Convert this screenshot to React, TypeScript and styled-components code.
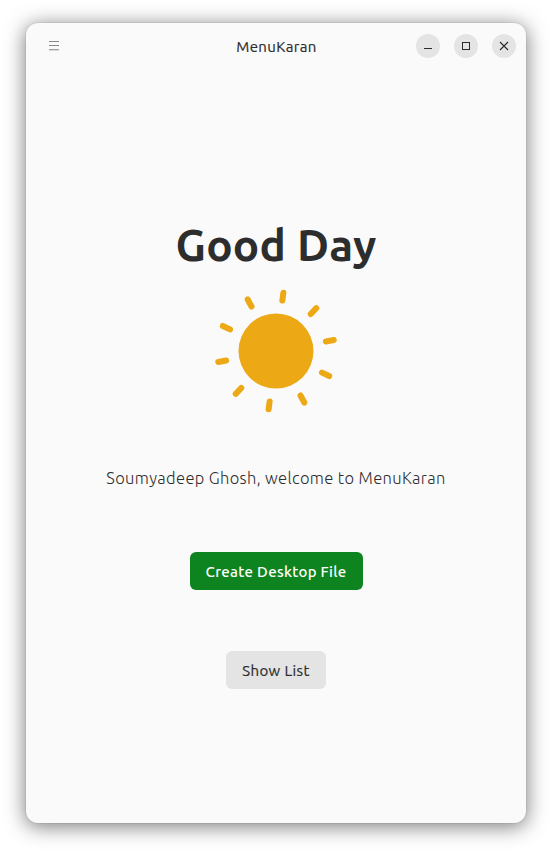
import React from "react";
import styled, { createGlobalStyle } from "styled-components";

const GlobalStyle = createGlobalStyle`
  *, *::before, *::after { box-sizing: border-box; }
  html, body { margin: 0; background: #fff; }
  body {
    color: #2d2d2d;
    font-family: Ubuntu, "Noto Sans", "Open Sans", sans-serif;
  }
`;

const Desktop = styled.div`
  display: flex;
  justify-content: center;
  height: 852px;
  padding-top: 23px;
  overflow: hidden;
`;

const Window = styled.main`
  display: flex;
  flex-direction: column;
  width: 500px;
  height: 800px;
  border-radius: 12px;
  background: #fafafa;
  box-shadow: 0 3px 20px 1px rgba(0, 0, 0, 0.5), 0 0 0 1px rgba(0, 0, 0, 0.05);
`;

const HeaderBar = styled.header`
  display: grid;
  grid-template-columns: 1fr auto 1fr;
  align-items: center;
  height: 46px;
  padding: 0 10px;
`;

const Title = styled.h1`
  margin: 0;
  padding: 1px 0 0 1px;
  font-size: 15px;
  font-weight: 400;
  line-height: 20px;
  letter-spacing: 0.35px;
  -webkit-text-stroke: 0.2px;
`;

const MenuButton = styled.button`
  display: flex;
  width: 16px;
  height: 16px;
  margin-left: 10px;
  padding: 0;
  border: 0;
  background: none;
  color: #888;
`;

const WindowControls = styled.div`
  display: flex;
  justify-content: flex-end;
  gap: 14px;
`;

const ControlButton = styled.button`
  width: 24px;
  height: 24px;
  padding: 0;
  border: 0;
  border-radius: 50%;
  background: #e4e4e4;
  color: #2a2a2a;

  svg { display: block; }
`;

const Content = styled.section`
  display: flex;
  flex-direction: column;
  align-items: center;
`;

const Greeting = styled.h2`
  margin: 144px 0 0;
  font-size: 44px;
  font-weight: 600;
  line-height: 64px;
  letter-spacing: 0.25px;
  white-space: nowrap;
`;

const Sun = styled.svg`
  display: block;
  width: 128px;
  height: 128px;
  margin-top: 10px;
`;

const Welcome = styled.p`
  margin: 51px 0 0;
  font-size: 16.5px;
  font-weight: 300;
  line-height: 24px;
  letter-spacing: 0.35px;
  white-space: nowrap;
`;

const ActionButton = styled.button<{ $primary?: boolean }>`
  width: ${({ $primary }) => ($primary ? 173 : 100)}px;
  height: 38px;
  margin-top: ${({ $primary }) => ($primary ? 61.5 : 61.8)}px;
  padding: ${({ $primary }) => ($primary ? 2 : 1)}px 0 0;
  border: 0;
  border-radius: 6px;
  background: ${({ $primary }) => ($primary ? "#0e8420" : "#e4e4e4")};
  color: ${({ $primary }) => ($primary ? "#fff" : "#2d2d2d")};
  font-family: Ubuntu, "Noto Sans", "Open Sans", sans-serif;
  font-size: 15px;
  font-weight: ${({ $primary }) => ($primary ? 500 : 400)};
  line-height: 36px;
  letter-spacing: ${({ $primary }) => ($primary ? 0.3 : 0.4)}px;
  -webkit-text-stroke: ${({ $primary }) => ($primary ? 0 : 0.2)}px;
  white-space: nowrap;
`;

const RAY_ANGLES = Array.from({ length: 10 }, (_, i) => 7.2 + i * 36);

export default function App() {
  return (
    <>
      <GlobalStyle />
      <Desktop>
        <Window>
          <HeaderBar>
            <MenuButton aria-label="Menu">
              <svg width="16" height="16" viewBox="0 0 16 16" fill="currentColor" shapeRendering="crispEdges">
                <rect x="3" y="3" width="10" height="1" />
                <rect x="3" y="7" width="10" height="1" />
                <rect x="3" y="11" width="10" height="1" opacity="0.8" />
                <rect x="3" y="12" width="10" height="1" opacity="0.25" />
              </svg>
            </MenuButton>
            <Title>MenuKaran</Title>
            <WindowControls>
              <ControlButton aria-label="Minimize">
                <svg width="24" height="24" viewBox="0 0 24 24">
                  <rect x="8" y="14" width="8" height="1" fill="currentColor" />
                </svg>
              </ControlButton>
              <ControlButton aria-label="Maximize">
                <svg width="24" height="24" viewBox="0 0 24 24">
                  <rect x="8.5" y="8.5" width="7" height="7" fill="none" stroke="currentColor" />
                </svg>
              </ControlButton>
              <ControlButton aria-label="Close">
                <svg width="24" height="24" viewBox="0 0 24 24">
                  <path d="M8 8l8 8M16 8l-8 8" fill="none" stroke="currentColor" strokeWidth="1.1" />
                </svg>
              </ControlButton>
            </WindowControls>
          </HeaderBar>
          <Content>
            <Greeting>Good Day</Greeting>
            <Sun viewBox="-64 -64 128 128" aria-hidden="true">
              <circle r="37.5" fill="#eda815" />
              {RAY_ANGLES.map((angle) => (
                <line
                  key={angle}
                  y1="-50.8"
                  y2="-58.8"
                  transform={`rotate(${angle})`}
                  stroke="#eda815"
                  strokeWidth="6"
                  strokeLinecap="round"
                />
              ))}
            </Sun>
            <Welcome>Soumyadeep Ghosh, welcome to MenuKaran</Welcome>
            <ActionButton $primary>Create Desktop File</ActionButton>
            <ActionButton>Show List</ActionButton>
          </Content>
        </Window>
      </Desktop>
    </>
  );
}
